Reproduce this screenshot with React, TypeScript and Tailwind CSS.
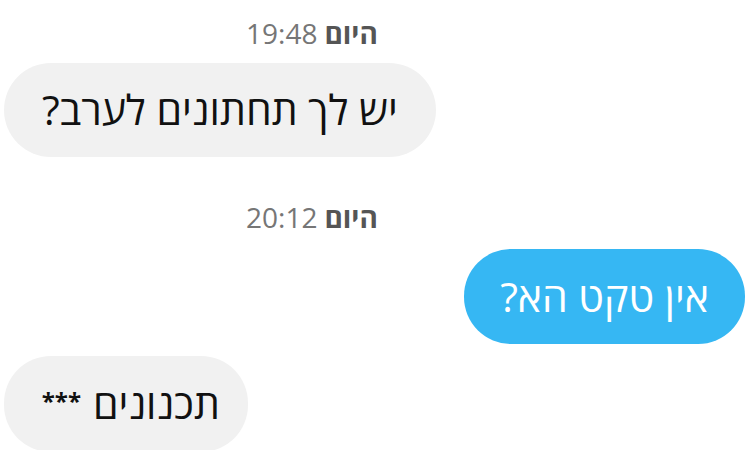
import React from 'react';

const font = { fontFamily: '"Open Sans", "Liberation Sans", "DejaVu Sans", sans-serif' };

const Stamp: React.FC<{ time: string; className?: string }> = ({ time, className }) => (
  <div className={`flex pl-[246px] ${className ?? ''}`}>
    <div dir="rtl" className="flex items-baseline gap-[7px] text-[28px] leading-none">
      <span className="font-bold text-[#555]">היום</span>
      <span className="text-[#767676]">{time}</span>
    </div>
  </div>
);

export default function App() {
  return (
    <div style={font} className="w-[749px] h-[450px] overflow-hidden bg-white flex flex-col">
      <Stamp time="19:48" className="mt-[19px]" />

      <div className="flex pl-[4px] mt-[16px]">
        <div
          dir="rtl"
          className="h-[94px] w-[432px] rounded-[47px] bg-[#f1f1f1] flex items-center justify-center text-[41px] text-[#111]"
        >
          יש לך תחתונים לערב?
        </div>
      </div>

      <Stamp time="20:12" className="mt-[46px]" />

      <div className="flex justify-end pr-[4px] mt-[18px]">
        <div
          dir="rtl"
          className="h-[95px] w-[281px] rounded-[47px] bg-[#36b7f3] flex items-center justify-center text-[41px] text-white"
        >
          אין טקט הא?
        </div>
      </div>

      <div className="flex pl-[4px] mt-[12px]">
        <div
          dir="rtl"
          className="h-[96px] w-[244px] rounded-[47px] bg-[#f1f1f1] flex items-center justify-start pr-[28px] gap-[12px] text-[41px] text-[#111]"
        >
          <span>תכנונים</span>
          <span className="text-[24px] font-bold self-center -mt-[6px]">***</span>
        </div>
      </div>
    </div>
  );
}
